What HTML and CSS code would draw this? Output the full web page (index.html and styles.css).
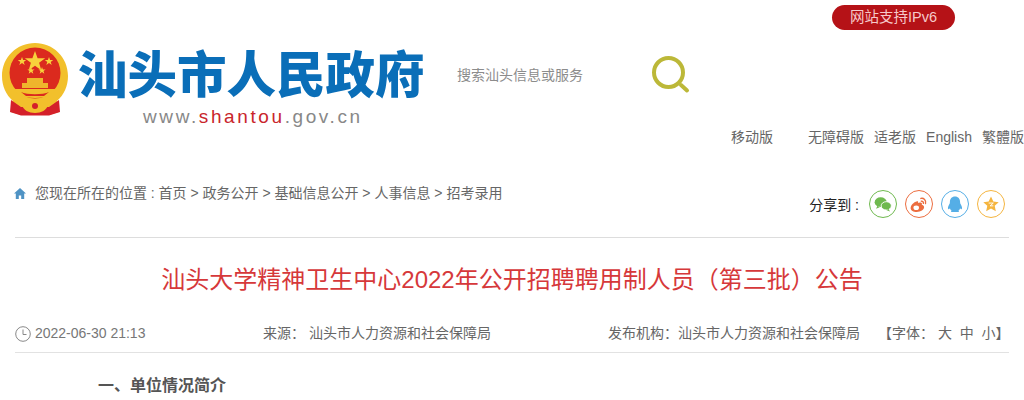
FILE: index.html
```html
<!DOCTYPE html>
<html lang="zh-CN">
<head>
    <meta charset="UTF-8">
    <title>汕头大学精神卫生中心2022年公开招聘聘用制人员（第三批）公告</title>
    <link rel="stylesheet" href="styles.css">
</head>
<body>
<div class="top-bar">
    <a class="ipv6">网站支持IPv6</a>
</div>

<div class="header">
    <svg class="emblem" viewBox="0 0 68 74">
        <path d="M34 1C16 1 1 15 1 34c0 10 4 19 11 25l-2 11 10 3h28l10-3-2-11c7-6 11-15 11-25C67 15 52 1 34 1z" fill="#f2c02c"/>
        <circle cx="34" cy="31" r="25.500" fill="#db2a1e"/>
        <path d="M10 58l-1 12 11 3.500h28L59 70l-1-12-10 7H20z" fill="#d4202a"/>
        <path d="M34 9l2.600 7.200h7.600l-6.100 4.600 2.200 7.400-6.300-4.500-6.300 4.500 2.200-7.400-6.100-4.600h7.600z" fill="#f8d23c"/>
        <path d="M21 15l1.100 3h3.100l-2.500 1.900 1 3.100-2.700-1.900-2.700 1.900 1-3.100-2.500-1.900h3.100zM48 15l1.100 3h3.100l-2.500 1.900 1 3.100-2.700-1.900-2.700 1.900 1-3.100-2.500-1.900h3.100zM30 25l.9 2.500h2.700l-2.100 1.600.8 2.600-2.300-1.600-2.300 1.600.8-2.600-2.100-1.600h2.700zM41 25l.9 2.500h2.700l-2.100 1.600.8 2.600-2.300-1.600-2.300 1.600.8-2.600-2.100-1.600h2.700z" fill="#f8d23c"/>
        <path d="M26 36h16v5h5v5H21v-5h5z" fill="#efb52c"/>
        <path d="M13 47h42c-2 5-8 9-21 9s-19-4-21-9z" fill="#f2c02c"/>
        <path d="M20 50c6 3 22 3 28 0l-5 4H25z" fill="#db2a1e"/>
        <path d="M21 63c6-4 20-4 26 0-1 5-7 8-13 8s-12-3-13-8z" fill="#f2c02c"/>
        <circle cx="34" cy="64" r="3" fill="#d4202a"/>
    </svg>
    <div class="brand">
        <div class="brand-name">汕头市人民政府</div>
        <div class="brand-url">www.<span class="red">shantou</span>.gov.cn</div>
    </div>
    <div class="search">
        <span class="search-text">搜索汕头信息或服务</span>
        <svg class="search-icon" viewBox="0 0 38 38">
            <circle cx="16.500" cy="16.500" r="14.500" fill="none" stroke="#bcb838" stroke-width="4"/>
            <path d="M29 29l6 5.500" stroke="#bcb838" stroke-width="4" stroke-linecap="round"/>
        </svg>
    </div>
</div>

<div class="links">
    <a class="mobile">移动版</a>
    <a>无障碍版</a>
    <a>适老版</a>
    <a>English</a>
    <a>繁體版</a>
</div>

<div class="main">
    <div class="crumb-row">
        <div class="crumb">
            <svg class="home" viewBox="0 0 12 11">
                <path d="M6 0L0 5.600h1.800V11h3V7.400h2.400V11h3V5.600H12z" fill="#4f93c4"/>
            </svg>
            您现在所在的位置&nbsp;:&nbsp;首页 &gt; 政务公开 &gt; 基础信息公开 &gt; 人事信息 &gt; 招考录用
        </div>
        <div class="share">
            <span class="share-label">分享到&nbsp;:</span>
            <span class="share-btn wechat">
                <svg viewBox="0 0 28 28">
                    <ellipse cx="11.500" cy="12" rx="6.500" ry="5.300" fill="#6fb94f"/>
                    <ellipse cx="17.500" cy="16" rx="5.500" ry="4.500" fill="#6fb94f" stroke="#fff" stroke-width="1"/>
                    <path d="M8 16l-1.500 3 4-1.500zM20 19.500l1.500 2.500-4-1.500z" fill="#6fb94f"/>
                </svg>
            </span>
            <span class="share-btn weibo">
                <svg viewBox="0 0 28 28">
                    <path d="M12 11c-4 1-7 4.500-7 7.500 0 2.500 3 4 6.500 4 4.500 0 8-2.500 8-5 0-1.600-1.500-2.400-2.500-2.700 .6-1.800-.4-2.800-2-2.400l-2 .6c.4-1.600-.2-2.300-1-2z" fill="#ec6d3f"/>
                    <ellipse cx="11" cy="18" rx="3" ry="2.500" fill="#fff"/>
                    <path d="M16 8c3-.8 6 1.800 5 5.500M16.500 11c1.500-.3 2.500 1 2.200 2.300" fill="none" stroke="#ec6d3f" stroke-width="1.500" stroke-linecap="round"/>
                </svg>
            </span>
            <span class="share-btn qq">
                <svg viewBox="0 0 28 28">
                    <path d="M14 6c-3.500 0-5.500 2.600-5.500 6 0 1-.2 1.500-.8 2.500-1.200 2-1.700 4-1 5 .5.500 1.300 0 1.800-.8.300 1.200 1 2 1.800 2.500-.8.500-1 1.500 .7 1.500h6c1.700 0 1.500-1 .7-1.500.8-.5 1.500-1.300 1.800-2.500.5.800 1.300 1.300 1.800.8.700-1 .2-3-1-5-.6-1-.8-1.500-.8-2.500 0-3.400-2-6-5.500-6z" fill="#55aee6"/>
                </svg>
            </span>
            <span class="share-btn qzone">
                <svg viewBox="0 0 28 28">
                    <path d="M14 6l2.500 5.300 5.800.7-4.300 4 1.200 5.800-5.200-2.900-5.200 2.900 1.200-5.800-4.300-4 5.800-.7z" fill="#f5b53f"/>
                    <path d="M11.500 13h5l-3.500 3h3.500" fill="none" stroke="#fff" stroke-width="1"/>
                </svg>
            </span>
        </div>
    </div>

    <h1 class="title">汕头大学精神卫生中心2022年公开招聘聘用制人员（第三批）公告</h1>

    <div class="meta">
        <div class="meta-date">
            <svg class="clock" viewBox="0 0 16 16">
                <circle cx="8" cy="8" r="7.300" fill="none" stroke="#888" stroke-width="1"/>
                <path d="M8 3.500V8.500H11.500" fill="none" stroke="#888" stroke-width="1"/>
            </svg>
            2022-06-30 21:13
        </div>
        <div>来源：&nbsp;汕头市人力资源和社会保障局</div>
        <div>发布机构：汕头市人力资源和社会保障局</div>
        <div class="font-size">【字体：&nbsp;大&nbsp;&nbsp;中&nbsp;&nbsp;小】</div>
    </div>

    <p class="lead">一、单位情况简介</p>
</div>
</body>
</html>
```

FILE: styles.css
```css
html, body {
    margin: 0;
    padding: 0;
    height: 400px;
    overflow: hidden;
}

body {
    background-color: #fff;
    font-family: "Liberation Sans", "Noto Sans CJK SC", sans-serif;
    font-size: 14px;
    color: #666;
}

.top-bar {
    display: flex;
    justify-content: flex-end;
    height: 42px;
    padding: 5px 69px 0 0;
    box-sizing: border-box;
}

.ipv6 {
    width: 123px;
    height: 25px;
    line-height: 25px;
    text-align: center;
    border-radius: 13px;
    background-color: #b51217;
    color: #f6c9c9;
    font-size: 14.500px;
}

.header {
    display: flex;
    height: 86px;
    padding-left: 1px;
}

.emblem {
    width: 68px;
    height: 74px;
    flex: none;
}

.brand {
    width: 346px;
    margin-left: 9px;
    padding-top: 2px;
}

.brand-name {
    height: 55px;
    line-height: 55px;
    font-family: "Noto Sans CJK SC", sans-serif;
    font-size: 49.500px;
    font-weight: 900;
    color: #0a6eb8;
    white-space: nowrap;
}

.brand-url {
    margin-top: 6px;
    padding-left: 65px;
    font-size: 19px;
    line-height: 24px;
    letter-spacing: 2.600px;
    color: #888;
}

.red {
    color: #c9252b;
}

.search {
    display: flex;
    margin-left: 33px;
}

.search-text {
    width: 195px;
    margin-top: 23px;
    line-height: 20px;
    color: #8c8c8c;
}

.search-icon {
    width: 38px;
    height: 38px;
    margin-top: 14px;
}

.links {
    display: flex;
    justify-content: flex-end;
    gap: 10px;
    line-height: 20px;
    margin-top: -1px;
}

.links .mobile {
    margin-right: 25px;
}

.main {
    padding: 0 15px;
}

.crumb-row {
    display: flex;
    justify-content: space-between;
    height: 91px;
    border-bottom: 1px solid #ddd;
    box-sizing: border-box;
}

.crumb {
    margin: 36px 0 0 -1px;
    line-height: 20px;
    white-space: nowrap;
}

.home {
    width: 12px;
    height: 11px;
    margin-right: 5px;
    vertical-align: -1px;
}

.share {
    display: flex;
    align-items: center;
    gap: 8px;
    height: 28px;
    margin-top: 43px;
    padding-right: 4px;
}

.share-label {
    margin-right: 2px;
    font-size: 14px;
    color: #222;
}

.share-btn {
    width: 28px;
    height: 28px;
    border-radius: 50%;
    border: 1px solid;
    box-sizing: border-box;
}

.share-btn svg {
    display: block;
    width: 26px;
    height: 26px;
}

.wechat { border-color: #6fb94f; }
.weibo { border-color: #ec6d3f; }
.qq { border-color: #55aee6; }
.qzone { border-color: #f5b53f; }

.title {
    margin: 27px 0 0;
    text-align: center;
    font-size: 24px;
    font-weight: normal;
    line-height: 30px;
    color: #d6383a;
}

.meta {
    display: grid;
    grid-template-columns: 248px 345px 272px auto;
    height: 30px;
    margin-top: 28px;
    line-height: 20px;
    border-bottom: 1px solid #e2e2e2;
    white-space: nowrap;
    box-sizing: border-box;
}

.meta-date {
    color: #777;
}

.clock {
    width: 16px;
    height: 16px;
    vertical-align: -4px;
}

.font-size {
    margin-left: -2px;
}

.lead {
    margin: 21px 0 0 83px;
    font-size: 16px;
    font-weight: bold;
    line-height: 24px;
    color: #555;
}
```
